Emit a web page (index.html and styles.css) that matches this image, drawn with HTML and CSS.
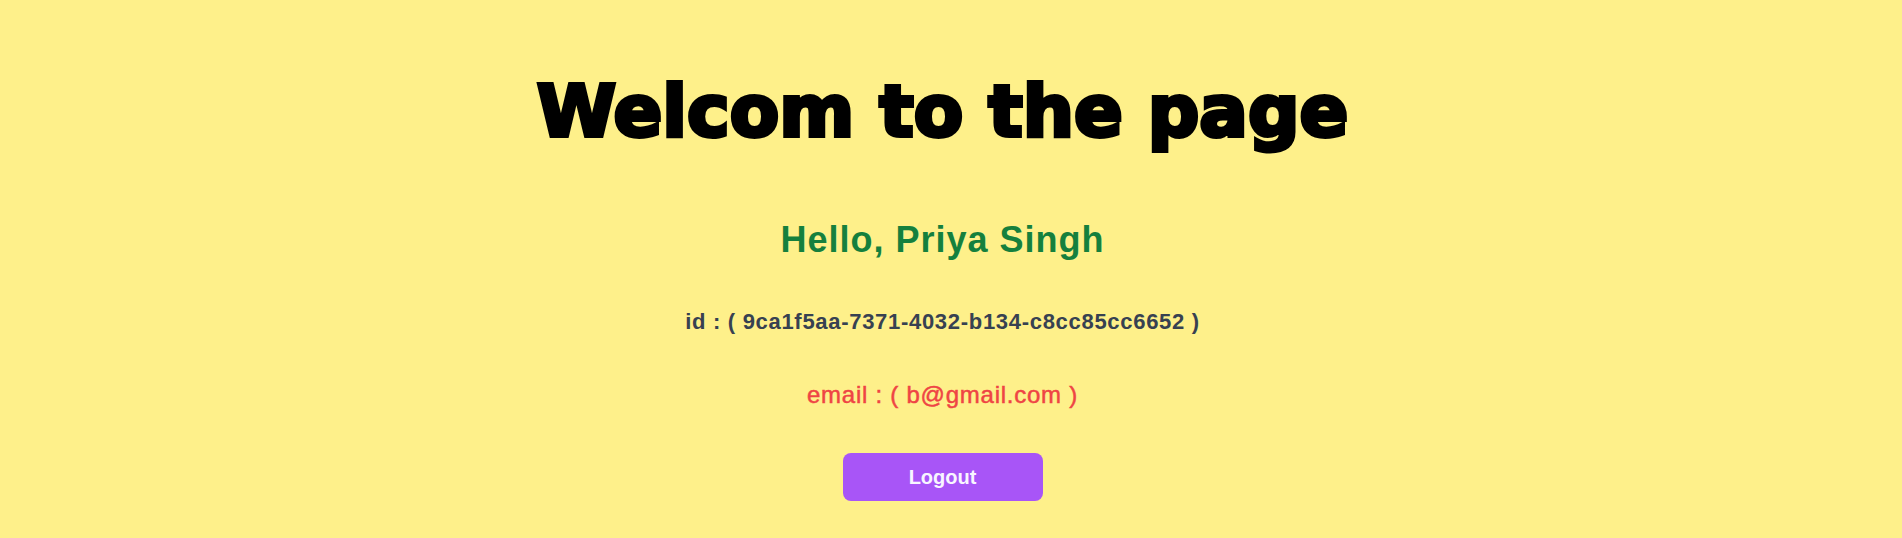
FILE: index.html
```html
<!DOCTYPE html>
<html>
<head>
<meta charset="utf-8">
<title>Welcome</title>
<link rel="stylesheet" href="styles.css">
</head>
<body>
<main class="page">
  <h1 class="title">Welcom to the page</h1>
  <h2 class="greeting">Hello, Priya Singh</h2>
  <p class="user-id">id : ( 9ca1f5aa-7371-4032-b134-c8cc85cc6652 )</p>
  <p class="user-email">email : ( b@gmail.com )</p>
  <button class="logout" type="button">Logout</button>
</main>
</body>
</html>
```
FILE: styles.css
```css
html, body {
  margin: 0;
  padding: 0;
  background: #fef08a;
  height: 100%;
}
body {
  font-family: "Liberation Sans", Arial, sans-serif;
}
.page {
  display: flex;
  flex-direction: column;
  align-items: center;
  margin-right: 17px;
  padding-top: 77px;
}
.title {
  margin: 0;
  font-family: "DejaVu Sans", sans-serif;
  font-weight: 700;
  font-size: 72px;
  line-height: 72px;
  color: #000;
  -webkit-text-stroke: 4px #000;
  position: relative;
  top: -2px;
}
.greeting {
  margin: 71px 0 0;
  font-size: 36px;
  line-height: 40px;
  font-weight: 700;
  letter-spacing: 1px;
  color: #15803d;
}
.user-id {
  margin: 48px 0 0;
  font-size: 22px;
  line-height: 28px;
  font-weight: 700;
  letter-spacing: 0.7px;
  color: #374151;
}
.user-email {
  margin: 43px 0 0;
  font-size: 24px;
  line-height: 32px;
  font-weight: 400;
  letter-spacing: 0.75px;
  color: #ef4444;
  -webkit-text-stroke: 0.5px #ef4444;
}
.logout {
  margin-top: 42px;
  width: 200px;
  height: 48px;
  padding: 0;
  border: none;
  border-radius: 8px;
  background: #a855f7;
  color: #f8f5ff;
  font-family: "Liberation Sans", Arial, sans-serif;
  font-size: 20px;
  line-height: 28px;
  font-weight: 700;
}
```
